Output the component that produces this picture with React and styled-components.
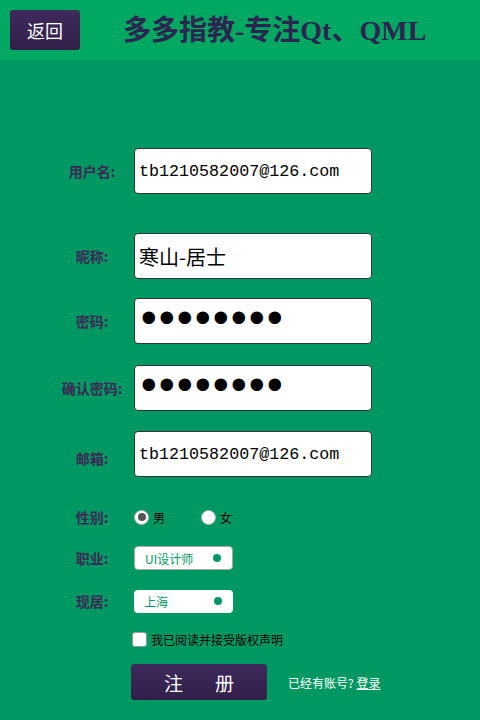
import styled, { createGlobalStyle } from "styled-components";

const GlobalStyle = createGlobalStyle`
  html, body {
    margin: 0;
    padding: 0;
    background: #009862;
  }
  body {
    font-family: "Noto Sans CJK SC", "Liberation Sans", sans-serif;
  }
`;

export default function App() {
  return (
    <Page>
      <GlobalStyle />
      <Header>
        <BackButton>返回</BackButton>
        <Title>多多指教-专注Qt、QML</Title>
      </Header>
      <Form>
        <Row $mt={88}>
          <Label>用户名:</Label>
          <Field readOnly value="tb1210582007@126.com" />
        </Row>
        <Row $mt={39}>
          <Label>昵称:</Label>
          <Field readOnly $cjk value="寒山-居士" />
        </Row>
        <Row $mt={19}>
          <Label>密码:</Label>
          <Field readOnly type="password" value="12345678" />
        </Row>
        <Row $mt={21}>
          <Label>确认密码:</Label>
          <Field readOnly type="password" value="12345678" />
        </Row>
        <Row $mt={20}>
          <Label $drop={4}>邮箱:</Label>
          <Field readOnly value="tb1210582007@126.com" />
        </Row>

        <SmallRow $mt={28}>
          <Label>性别:</Label>
          <Options>
            <Choice>
              <Radio type="radio" name="sex" defaultChecked />
              男
            </Choice>
            <Choice>
              <Radio type="radio" name="sex" />
              女
            </Choice>
          </Options>
        </SmallRow>
        <SmallRow $mt={17}>
          <Label>职业:</Label>
          <Combo $bordered>
            UI设计师
            <ComboDot />
          </Combo>
        </SmallRow>
        <SmallRow $mt={19}>
          <Label>现居:</Label>
          <Combo>
            上海
            <ComboDot />
          </Combo>
        </SmallRow>

        <AgreeRow>
          <Check type="checkbox" />
          我已阅读并接受版权声明
        </AgreeRow>
        <ActionRow>
          <RegisterButton>注册</RegisterButton>
          <LoginHint>
            已经有账号? <a href="#">登录</a>
          </LoginHint>
        </ActionRow>
      </Form>
    </Page>
  );
}

const Page = styled.div`
  width: 480px;
  height: 720px;
  background: #009862;
  overflow: hidden;
`;

const Header = styled.div`
  height: 60px;
  background: #00a862;
  display: flex;
  align-items: center;
  padding-left: 10px;
  box-sizing: border-box;
`;

const BackButton = styled.button`
  width: 70px;
  height: 40px;
  border: none;
  border-radius: 3px;
  background: linear-gradient(#3e2a5c, #321f49);
  color: #ffffff;
  font-family: "Noto Sans CJK SC", sans-serif;
  font-size: 18px;
  padding: 0;
`;

const Title = styled.h1`
  margin: 0 0 4px 43px;
  font-family: "Liberation Serif", "Noto Sans CJK SC", serif;
  font-weight: bold;
  font-size: 28px;
  color: #2c2550;
  white-space: nowrap;
`;

const Form = styled.div`
  display: flex;
  flex-direction: column;
  padding-left: 50px;
`;

const Row = styled.div`
  display: grid;
  grid-template-columns: 84px 238px;
  align-items: center;
  height: 46px;
  margin-top: ${(p) => p.$mt || 0}px;
`;

const SmallRow = styled(Row)`
  height: 24px;
`;

const Label = styled.span`
  text-align: center;
  font-family: "Noto Sans CJK SC", sans-serif;
  font-weight: bold;
  font-size: 14px;
  color: #3b2a55;
  position: relative;
  top: ${(p) => p.$drop || 0}px;
`;

const Field = styled.input`
  box-sizing: border-box;
  width: 238px;
  height: 46px;
  border: 1px solid #333;
  border-radius: 4px;
  background: #ffffff;
  padding: 0 0 0 4px;
  color: #000;
  outline: none;
  font-family: ${(p) =>
    p.$cjk ? `"Noto Sans CJK SC", sans-serif` : `"Liberation Mono", monospace`};
  font-size: ${(p) => (p.$cjk ? "20px" : "16.7px")};

  &[type="password"] {
    font-family: "Liberation Mono", monospace;
    font-size: 46px;
    letter-spacing: -9.6px;
    padding-left: 0;
  }
`;

const Options = styled.div`
  display: flex;
  align-items: center;
  gap: 36px;
`;

const Choice = styled.label`
  display: flex;
  align-items: center;
  gap: 4px;
  font-size: 12px;
  color: #000;
  font-family: "Noto Sans CJK SC", sans-serif;
`;

const Radio = styled.input`
  appearance: none;
  margin: 0;
  width: 15px;
  height: 15px;
  border-radius: 50%;
  background: #fff;
  border: 1px solid #b0b0b0;
  box-sizing: border-box;
  display: grid;
  place-items: center;

  &:checked::after {
    content: "";
    width: 8px;
    height: 8px;
    border-radius: 50%;
    background: #555555;
  }
`;

const Combo = styled.div`
  box-sizing: border-box;
  width: 99px;
  height: ${(p) => (p.$bordered ? 24 : 23)}px;
  background: #ffffff;
  border: ${(p) => (p.$bordered ? "1px solid #a8a8a8" : "none")};
  border-radius: 4px;
  display: flex;
  align-items: center;
  justify-content: space-between;
  padding: 0 11px 0 10px;
  color: #009862;
  font-size: 12px;
  font-family: "Noto Sans CJK SC", sans-serif;
`;

const ComboDot = styled.span`
  width: 8px;
  height: 8px;
  border-radius: 50%;
  background: #009862;
`;

const AgreeRow = styled.label`
  display: flex;
  align-items: center;
  gap: 4px;
  margin-top: 14px;
  height: 24px;
  padding-left: 82px;
  font-size: 12px;
  color: #000;
  font-family: "Noto Sans CJK SC", sans-serif;
`;

const Check = styled.input`
  appearance: none;
  margin: 0;
  width: 15px;
  height: 15px;
  background: #fff;
  border: 1px solid #999;
  border-radius: 3px;
  box-sizing: border-box;
`;

const ActionRow = styled.div`
  display: flex;
  align-items: center;
  margin-top: 13px;
  padding-left: 81px;
`;

const RegisterButton = styled.button`
  width: 136px;
  height: 36px;
  border: none;
  border-radius: 3px;
  background: linear-gradient(#3e2a5c, #321f49);
  color: #fff;
  font-family: "Noto Sans CJK SC", sans-serif;
  font-size: 19px;
  letter-spacing: 32px;
  text-indent: 32px;
  padding: 0;
`;

const LoginHint = styled.span`
  margin-left: 21px;
  font-size: 12px;
  color: #fff;
  font-family: "Noto Sans CJK SC", sans-serif;

  a {
    color: #fff;
  }
`;
